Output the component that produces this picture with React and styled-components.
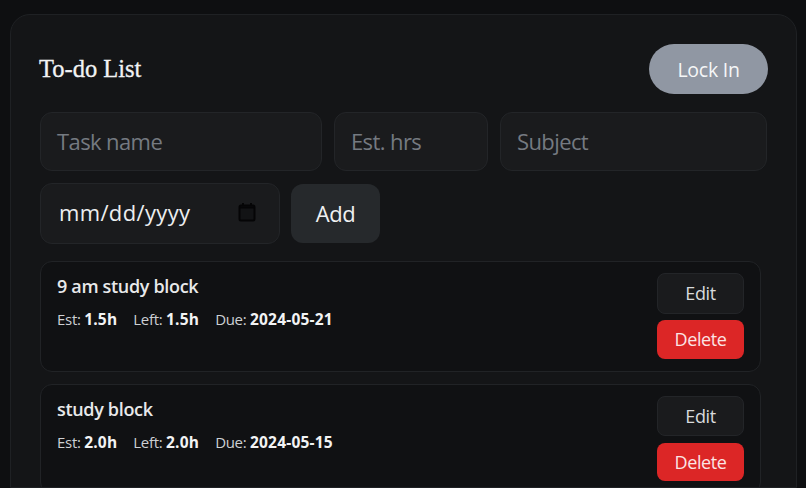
import React from "react";
import styled, { createGlobalStyle } from "styled-components";

const tasks = [
  { id: 1, name: "9 am study block", est: "1.5h", left: "1.5h", due: "2024-05-21" },
  { id: 2, name: "study block", est: "2.0h", left: "2.0h", due: "2024-05-15" },
];

const App = () => {
  return (
    <>
      <GlobalStyle />
      <Card>
        <Header>
          <Title>To-do List</Title>
          <LockButton>Lock In</LockButton>
        </Header>
        <InputRow>
          <Field $width="282px">
            <Placeholder>Task name</Placeholder>
          </Field>
          <Field $width="154px">
            <Placeholder>Est. hrs</Placeholder>
          </Field>
          <Field $width="267px">
            <Placeholder>Subject</Placeholder>
          </Field>
        </InputRow>
        <DateRow>
          <DateField>
            <DateText>mm/dd/yyyy</DateText>
            <svg width="18" height="20" viewBox="0 0 18 20" fill="none">
              <rect x="1.5" y="3.5" width="15" height="15" rx="1.5" fill="#121315" stroke="#050506" strokeWidth="2" />
              <path d="M1.5 5.5h15" stroke="#050506" strokeWidth="2" />
              <path d="M5 1v3M13 1v3" stroke="#050506" strokeWidth="2" />
            </svg>
          </DateField>
          <AddButton>Add</AddButton>
        </DateRow>
        <List>
          {tasks.map((task) => (
            <Item key={task.id}>
              <Info>
                <TaskName>{task.name}</TaskName>
                <Meta>
                  <span>
                    Est: <b>{task.est}</b>
                  </span>
                  <span>
                    Left: <b>{task.left}</b>
                  </span>
                  <span>
                    Due: <b>{task.due}</b>
                  </span>
                </Meta>
              </Info>
              <Actions>
                <EditButton>Edit</EditButton>
                <DeleteButton>Delete</DeleteButton>
              </Actions>
            </Item>
          ))}
        </List>
      </Card>
    </>
  );
};

const GlobalStyle = createGlobalStyle`
  html, body {
    margin: 0;
    height: 488px;
    overflow: hidden;
    background: #0e0f11;
    font-family: "Open Sans", "Noto Sans", sans-serif;
  }
`;

const Card = styled.div`
  box-sizing: border-box;
  width: 787px;
  height: 474px;
  margin: 14px 0 0 10px;
  padding: 29px 28px 0 29px;
  background: #141517;
  border: 1px solid #1f2124;
  border-radius: 20px 20px 0 0;
  overflow: hidden;
`;

const Header = styled.div`
  display: flex;
  align-items: center;
  justify-content: space-between;
  height: 50px;
  margin-bottom: 18px;
`;

const Title = styled.h2`
  margin: 0 0 0 -1px;
  font-family: "Liberation Serif", serif;
  font-size: 24.5px;
  font-weight: 400;
  color: #f2f3f4;
  -webkit-text-stroke: 0.3px #f2f3f4;
`;

const LockButton = styled.button`
  width: 119px;
  height: 50px;
  border: none;
  border-radius: 25px;
  background: #9097a3;
  color: #f5f6f7;
  font: inherit;
  font-size: 19.5px;
  letter-spacing: -0.25px;
`;

const InputRow = styled.div`
  display: flex;
  gap: 12px;
  margin-bottom: 12px;
`;

const Field = styled.div`
  box-sizing: border-box;
  display: flex;
  align-items: center;
  width: ${(p) => p.$width};
  height: 59px;
  padding: 0 16px 2px;
  background: #1a1b1d;
  border: 1px solid #232528;
  border-radius: 12px;
`;

const Placeholder = styled.span`
  color: #757a81;
  font-size: 22px;
  letter-spacing: -0.6px;
`;

const DateRow = styled.div`
  display: flex;
  align-items: center;
  gap: 11px;
  margin-bottom: 17px;
`;

const DateField = styled(Field)`
  width: 240px;
  height: 61px;
  justify-content: space-between;
  padding: 0 23px 4px 18px;
`;

const DateText = styled.span`
  color: #eceef0;
  font-size: 22px;
  letter-spacing: 0.35px;
`;

const AddButton = styled.button`
  width: 89px;
  height: 59px;
  padding: 0 0 2px;
  border: none;
  border-radius: 12px;
  background: #26292c;
  color: #eff0f1;
  font: inherit;
  font-size: 22px;
  letter-spacing: -0.4px;
`;

const List = styled.div`
  display: flex;
  flex-direction: column;
  gap: 12px;
  margin-right: 7px;
`;

const Item = styled.div`
  box-sizing: border-box;
  display: flex;
  justify-content: space-between;
  height: 110.5px;
  padding: 11px 16px 12px 16px;
  background: #101113;
  border: 1px solid #212326;
  border-radius: 12px;
`;

const Info = styled.div`
  display: flex;
  flex-direction: column;
  gap: 10px;
  padding-top: 1px;
`;

const TaskName = styled.div`
  color: #e8e9ea;
  font-size: 18px;
  font-weight: 600;
  letter-spacing: -0.33px;
`;

const Meta = styled.div`
  display: flex;
  gap: 16px;
  color: #cdd0d3;
  font-size: 15px;
  letter-spacing: -0.3px;

  b {
    color: #f2f3f4;
    font-size: 15.5px;
    font-weight: 700;
    letter-spacing: 0.2px;
  }
`;

const Actions = styled.div`
  display: flex;
  flex-direction: column;
  gap: 6.5px;
`;

const EditButton = styled.button`
  box-sizing: border-box;
  width: 87px;
  height: 41px;
  background: #1a1b1d;
  border: 1px solid #232528;
  border-radius: 8px;
  color: #d8dadc;
  font: inherit;
  font-size: 18px;
  letter-spacing: -0.4px;
`;

const DeleteButton = styled(EditButton)`
  height: 39px;
  background: #dc2626;
  border: none;
  color: #fbe4e4;
`;

export default App;
